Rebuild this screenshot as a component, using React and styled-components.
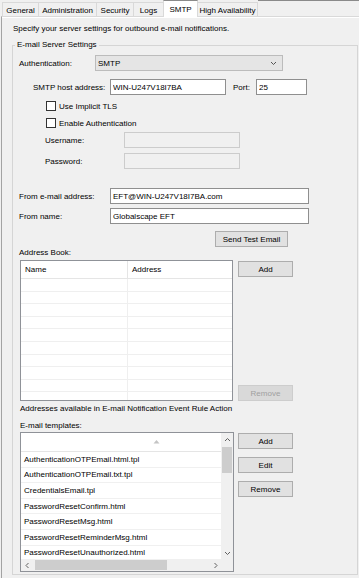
import React from "react";
import styled, { createGlobalStyle } from "styled-components";

const GlobalStyle = createGlobalStyle`
  html, body {
    margin: 0;
    padding: 0;
    background: #f0f0f0;
  }
  body {
    font-family: "Liberation Sans", Arial, sans-serif;
    font-size: 8px;
    color: #000;
  }
  * {
    box-sizing: border-box;
  }
`;

const TABS = [
  { label: "General", w: 37 },
  { label: "Administration", w: 59 },
  { label: "Security", w: 38 },
  { label: "Logs", w: 31 },
  { label: "SMTP", w: 35, active: true },
  { label: "High Availability", w: 61 },
];

const TEMPLATES = [
  "AuthenticationOTPEmail.html.tpl",
  "AuthenticationOTPEmail.txt.tpl",
  "CredentialsEmail.tpl",
  "PasswordResetConfirm.html",
  "PasswordResetMsg.html",
  "PasswordResetReminderMsg.html",
  "PasswordResetUnauthorized.html",
];

function Chevron({ dir = "down", color = "#606060" }) {
  const paths = {
    down: "M1 2 L3.5 4.5 L6 2",
    up: "M1 5 L3.5 2.5 L6 5",
    left: "M4.5 1 L2 3.5 L4.5 6",
    right: "M2.5 1 L5 3.5 L2.5 6",
  };
  return (
    <svg width="7" height="7" viewBox="0 0 7 7">
      <path d={paths[dir]} fill="none" stroke={color} strokeWidth="1" />
    </svg>
  );
}

function App() {
  return (
    <Window>
      <GlobalStyle />
      <TabStrip>
        {TABS.map((t) => (
          <Tab key={t.label} $w={t.w} $active={t.active}>
            {t.label}
          </Tab>
        ))}
        <TabFiller />
      </TabStrip>
      <Panel>
        <Description>
          Specify your server settings for outbound e-mail notifications.
        </Description>
        <GroupBox>
          <Legend>E-mail Server Settings</Legend>

          <Row $top={4} $left={6}>
            <Label $w={76}>Authentication:</Label>
            <Select>
              <span>SMTP</span>
              <Chevron dir="down" color="#555" />
            </Select>
          </Row>

          <Row $top={8} $left={20}>
            <Label $w={77}>SMTP host address:</Label>
            <TextBox $w={116} defaultValue="WIN-U247V18I7BA" readOnly />
            <Label $w={23} style={{ marginLeft: 7 }}>
              Port:
            </Label>
            <TextBox $w={51} defaultValue="25" readOnly />
          </Row>

          <Row $top={5} $left={33} $h={12}>
            <CheckBox />
            <CheckText>Use Implicit TLS</CheckText>
          </Row>
          <Row $top={5} $left={33} $h={12}>
            <CheckBox />
            <CheckText>Enable Authentication</CheckText>
          </Row>

          <Row $top={3} $left={32}>
            <Label $w={79}>Username:</Label>
            <TextBox $w={116} disabled />
          </Row>
          <Row $top={5} $left={32}>
            <Label $w={79}>Password:</Label>
            <TextBox $w={116} disabled />
          </Row>

          <Row $top={19} $left={6}>
            <Label $w={91}>From e-mail address:</Label>
            <TextBox $w={199} defaultValue="EFT@WIN-U247V18I7BA.com" readOnly />
          </Row>
          <Row $top={4} $left={6}>
            <Label $w={91}>From name:</Label>
            <TextBox $w={199} defaultValue="Globalscape EFT" readOnly />
          </Row>

          <Row $top={7} $left={202}>
            <Button $w={73}>Send Test Email</Button>
          </Row>

          <Caption $top={0} $left={6}>
            Address Book:
          </Caption>

          <Split $top={1} $gap={5}>
            <AddressTable>
              <TableHead>
                <HeadCell>Name</HeadCell>
                <HeadCell>Address</HeadCell>
              </TableHead>
              {Array.from({ length: 10 }).map((_, i) => (
                <TableRow key={i}>
                  <BodyCell />
                  <BodyCell />
                </TableRow>
              ))}
            </AddressTable>
            <ButtonColumn $spread>
              <Button $w={55}>Add</Button>
              <Button $w={55} disabled>
                Remove
              </Button>
            </ButtonColumn>
          </Split>

          <Caption $top={2} $left={7}>
            Addresses available in E-mail Notification Event Rule Action
          </Caption>
          <Caption $top={5} $left={7}>
            E-mail templates:
          </Caption>

          <Split $top={0} $gap={4}>
            <ListBox>
              <ListViewport>
                <ListHead>
                  <svg width="7" height="5" viewBox="0 0 7 5">
                    <path d="M0.5 4.5 L3.5 1 L6.5 4.5 Z" fill="#c4c4c4" />
                  </svg>
                </ListHead>
                {TEMPLATES.map((name) => (
                  <ListItem key={name}>{name}</ListItem>
                ))}
              </ListViewport>
              <VScroll>
                <ArrowCell>
                  <Chevron dir="up" />
                </ArrowCell>
                <VTrack>
                  <VThumb />
                </VTrack>
                <ArrowCell>
                  <Chevron dir="down" />
                </ArrowCell>
              </VScroll>
              <HScroll>
                <ArrowCell>
                  <Chevron dir="left" />
                </ArrowCell>
                <HTrack>
                  <HThumb />
                </HTrack>
                <ArrowCell>
                  <Chevron dir="right" />
                </ArrowCell>
              </HScroll>
              <Corner />
            </ListBox>
            <ButtonColumn>
              <Button $w={55}>Add</Button>
              <Button $w={55}>Edit</Button>
              <Button $w={55}>Remove</Button>
            </ButtonColumn>
          </Split>
        </GroupBox>
      </Panel>
    </Window>
  );
}

const Window = styled.div`
  width: 359px;
  height: 578px;
  overflow: hidden;
  padding-left: 1px;
  background: #f0f0f0;
  display: flex;
  flex-direction: column;
`;

const TabStrip = styled.div`
  display: flex;
  align-items: flex-end;
  height: 16px;
  margin-left: 1px;
  flex-shrink: 0;
`;

const Tab = styled.div`
  width: ${(p) => p.$w}px;
  height: ${(p) => (p.$active ? 17 : 14)}px;
  margin-left: -1px;
  margin-bottom: ${(p) => (p.$active ? -1 : 0)}px;
  &:first-child {
    margin-left: 0;
  }
  position: relative;
  z-index: ${(p) => (p.$active ? 2 : 1)};
  display: flex;
  align-items: center;
  justify-content: center;
  white-space: nowrap;
  background: ${(p) => (p.$active ? "#ffffff" : "#f0f0f0")};
  border: 1px solid #d9d9d9;
  border-top-color: ${(p) => (p.$active ? "#8a8a8a" : "#d9d9d9")};
  border-bottom: none;
  padding-top: ${(p) => (p.$active ? 0 : 1)}px;
`;

const TabFiller = styled.div`
  flex: 1;
  align-self: stretch;
  border-top: 1px solid #8a8a8a;
`;

const Panel = styled.div`
  flex: 1;
  border-top: 1px solid #d9d9d9;
  border-left: 1px solid #a3a3a3;
  box-shadow: inset 0 1px 0 #ffffff;
  background: #f0f0f0;
  display: flex;
  flex-direction: column;
`;

const Description = styled.div`
  margin: 6px 0 0 11px;
  line-height: 12px;
  white-space: nowrap;
`;

const GroupBox = styled.fieldset`
  margin: 4px 0 0 10px;
  padding: 0;
  width: 346px;
  height: 536px;
  min-width: 0;
  border: 1px solid #d5d5d5;
  display: flex;
  flex-direction: column;
`;

const Legend = styled.legend`
  margin-left: 2px;
  padding: 0 2px;
  line-height: 12px;
`;

const Row = styled.div`
  display: flex;
  align-items: center;
  height: ${(p) => p.$h || 16}px;
  margin-top: ${(p) => p.$top}px;
  padding-left: ${(p) => p.$left}px;
  flex-shrink: 0;
`;

const Label = styled.span`
  width: ${(p) => p.$w}px;
  flex-shrink: 0;
  white-space: nowrap;
`;

const TextBox = styled.input`
  width: ${(p) => p.$w}px;
  height: 16px;
  margin: 0;
  padding: 0 2px;
  font: inherit;
  color: #000;
  background: #ffffff;
  border: 1px solid #8f8f8f;
  border-radius: 0;
  outline: none;
  &:disabled {
    background: #f0f0f0;
    border-color: #cccccc;
  }
`;

const Select = styled.div`
  width: 188px;
  height: 16px;
  display: flex;
  align-items: center;
  justify-content: space-between;
  padding: 0 5px 0 2px;
  background: #e5e5e5;
  border: 1px solid #bcbcbc;
`;

const CheckBox = styled.span`
  width: 10px;
  height: 10px;
  background: #ffffff;
  border: 1px solid #333333;
  flex-shrink: 0;
`;

const CheckText = styled.span`
  margin-left: 3px;
  white-space: nowrap;
`;

const Button = styled.button`
  width: ${(p) => p.$w}px;
  height: 16px;
  margin: 0;
  padding: 0;
  font: inherit;
  color: #000;
  background: #e1e1e1;
  border: 1px solid #adadad;
  border-radius: 0;
  white-space: nowrap;
  &:disabled {
    color: #a0a0a0;
    background: #d9d9d9;
    border-color: #cdcdcd;
  }
`;

const Caption = styled.div`
  margin-top: ${(p) => p.$top}px;
  padding-left: ${(p) => p.$left}px;
  line-height: 12px;
  white-space: nowrap;
  flex-shrink: 0;
`;

const Split = styled.div`
  display: flex;
  gap: ${(p) => p.$gap}px;
  margin-top: ${(p) => p.$top}px;
  padding-left: 7px;
  flex-shrink: 0;
`;

const ButtonColumn = styled.div`
  display: flex;
  flex-direction: column;
  justify-content: ${(p) => (p.$spread ? "space-between" : "flex-start")};
  gap: 8px;
  padding-top: 1px;
`;

const AddressTable = styled.div`
  width: 213px;
  height: 141px;
  overflow: hidden;
  background: #ffffff;
  border: 1px solid #8f9298;
`;

const TableHead = styled.div`
  display: grid;
  grid-template-columns: 106px 1fr;
  height: 18px;
  border-bottom: 1px solid #e5e5e5;
`;

const HeadCell = styled.div`
  display: flex;
  align-items: center;
  padding-left: 4px;
  & + & {
    border-left: 1px solid #e5e5e5;
  }
`;

const TableRow = styled.div`
  display: grid;
  grid-template-columns: 106px 1fr;
  height: 12.6px;
  border-bottom: 1px solid #efefef;
`;

const BodyCell = styled.div`
  & + & {
    border-left: 1px solid #efefef;
  }
`;

const ListBox = styled.div`
  width: 214px;
  height: 140px;
  background: #ffffff;
  border: 1px solid #8f9298;
  display: grid;
  grid-template-columns: 200px 12px;
  grid-template-rows: 126px 12px;
`;

const ListViewport = styled.div`
  overflow: hidden;
`;

const ListHead = styled.div`
  width: 270px;
  height: 19px;
  display: flex;
  align-items: center;
  justify-content: center;
  padding-bottom: 2px;
  border-bottom: 1px solid #e5e5e5;
`;

const ListItem = styled.div`
  height: 15.6px;
  display: flex;
  align-items: center;
  padding-left: 3px;
  white-space: nowrap;
  border-bottom: 1px solid #f0f0f0;
`;

const VScroll = styled.div`
  display: flex;
  flex-direction: column;
  background: #f0f0f0;
`;

const HScroll = styled.div`
  display: flex;
  background: #f0f0f0;
`;

const ArrowCell = styled.div`
  width: 12px;
  height: 12px;
  flex-shrink: 0;
  display: flex;
  align-items: center;
  justify-content: center;
`;

const VTrack = styled.div`
  flex: 1;
  padding: 2px 1px 0;
`;

const VThumb = styled.div`
  height: 26px;
  background: #cdcdcd;
`;

const HTrack = styled.div`
  flex: 1;
  padding: 1px 0 1px 2px;
`;

const HThumb = styled.div`
  width: 132px;
  height: 100%;
  background: #cdcdcd;
`;

const Corner = styled.div`
  background: #f0f0f0;
`;

export default App;
